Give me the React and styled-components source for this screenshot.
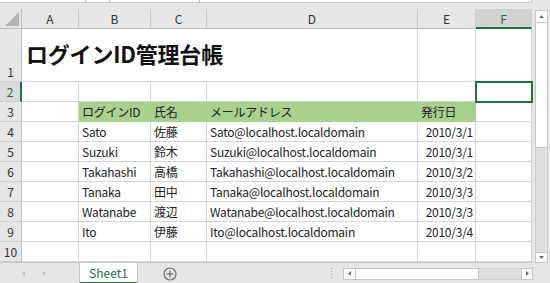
import React from "react";
import styled, { createGlobalStyle } from "styled-components";

const GlobalStyle = createGlobalStyle`
  html, body { margin: 0; padding: 0; background: #e6e6e6; }
  body { font-family: "Noto Sans CJK JP", "Noto Sans", sans-serif; }
`;

const GREEN = "#217346";
const GRID = "#d4d4d4";
const HEAD_BG = "#e6e6e6";
const HEAD_LINE = "#bdbdbd";
const FILL = "#a9d08e";

const Page = styled.div`
  width: 550px;
  height: 283px;
  overflow: hidden;
  background: ${HEAD_BG};
  display: flex;
  flex-direction: column;
  font-family: "Noto Sans CJK JP", "Noto Sans", sans-serif;
`;

const TopStrip = styled.div`
  height: 3px;
  display: flex;
  flex: none;
`;

const TopBox = styled.div`
  box-sizing: border-box;
  width: ${(p) => p.$w}px;
  height: 3px;
  background: #fff;
  border-bottom: 1px solid #c6c6c6;
  border-right: 1px solid #c6c6c6;
`;

const Workspace = styled.div`
  display: flex;
  padding-top: 6px;
  flex: none;
`;

const Sheet = styled.div`
  display: grid;
  grid-template-columns: 22px 57px 72px 56px 211px 58px 56px;
  grid-template-rows: 20px 53px repeat(9, 20px);
  width: 532px;
  border-bottom: 1px solid #c6c6c6;
`;

const Corner = styled.div`
  box-sizing: border-box;
  background: ${HEAD_BG};
  border-right: 1px solid ${HEAD_LINE};
  border-bottom: 1px solid ${HEAD_LINE};
  display: flex;
  align-items: flex-end;
  justify-content: flex-end;
  padding: 0 2px 2px 0;
`;

const ColHead = styled.div`
  box-sizing: border-box;
  background: ${(p) => (p.$active ? "#d2d2d2" : HEAD_BG)};
  border-right: 1px solid ${(p) => (p.$active ? "#d2d2d2" : "#c8c8c8")};
  border-bottom: ${(p) => (p.$active ? `2px solid ${GREEN}` : `1px solid ${HEAD_LINE}`)};
  color: ${(p) => (p.$active ? GREEN : "#333")};
  font-size: 12px;
  line-height: 16px;
  display: flex;
  align-items: center;
  justify-content: center;
  padding-top: ${(p) => (p.$active ? "1px" : "0")};
`;

const RowHead = styled.div`
  box-sizing: border-box;
  background: ${(p) => (p.$active ? "#dadada" : HEAD_BG)};
  border-right: ${(p) => (p.$active ? `2px solid ${GREEN}` : `1px solid ${HEAD_LINE}`)};
  border-bottom: 1px solid #cfcfcf;
  color: ${(p) => (p.$active ? "#2f5f42" : "#333")};
  font-size: 12px;
  line-height: 16px;
  display: flex;
  align-items: ${(p) => (p.$tall ? "flex-end" : "center")};
  justify-content: center;
  padding-bottom: ${(p) => (p.$tall ? "1px" : "0")};
`;

const Cell = styled.div`
  box-sizing: border-box;
  position: relative;
  grid-column: span ${(p) => p.$span || 1};
  background: ${(p) => p.$fill || "#fff"};
  border-right: 1px solid ${(p) => p.$fill || GRID};
  border-bottom: 1px solid ${(p) => p.$fill || GRID};
  color: #222;
  font-size: 12px;
  line-height: 16px;
  letter-spacing: -0.25px;
  white-space: nowrap;
  display: flex;
  align-items: center;
  justify-content: ${(p) => (p.$right ? "flex-end" : "flex-start")};
  padding: ${(p) => (p.$right ? "0 2px 0 0" : "0 0 0 3px")};
  ${(p) =>
    p.$selected &&
    `outline: 2px solid ${GREEN}; outline-offset: -1px; z-index: 2;`}
`;

const TitleCell = styled(Cell)`
  align-items: flex-end;
  font-size: 22px;
  font-weight: 700;
  line-height: 26px;
  color: #111;
  padding: 0 0 15px 4px;
  letter-spacing: -0.2px;
`;

const VScroll = styled.div`
  width: 18px;
  display: flex;
  flex-direction: column;
  padding: 1px 2px 0 3px;
  box-sizing: border-box;
`;

const ArrowBox = styled.div`
  box-sizing: border-box;
  width: ${(p) => p.$w || 13}px;
  height: ${(p) => p.$h || 13}px;
  background: #fff;
  border: 1px solid #c6c6c6;
  display: flex;
  align-items: center;
  justify-content: center;
  flex: none;
`;

const VThumb = styled.div`
  box-sizing: border-box;
  height: 125px;
  background: #fff;
  border: 1px solid #c6c6c6;
  border-top: none;
  flex: none;
`;

const VTrack = styled.div`
  flex: 1;
  background: #dedede;
  border-left: 1px solid #d0d0d0;
  border-right: 1px solid #d0d0d0;
`;

const BottomBar = styled.div`
  height: 21px;
  display: flex;
  align-items: stretch;
  flex: none;
`;

const NavArrows = styled.div`
  width: 79px;
  display: flex;
  align-items: center;
  gap: 16px;
  padding-left: 21px;
  box-sizing: border-box;
`;

const Tab = styled.div`
  box-sizing: border-box;
  width: 59px;
  background: #fff;
  border-left: 1px solid #c6c6c6;
  border-right: 1px solid #c6c6c6;
  border-bottom: 2px solid ${GREEN};
  color: ${GREEN};
  font-size: 12px;
  line-height: 16px;
  display: flex;
  align-items: center;
  justify-content: center;
`;

const AddButton = styled.div`
  margin-left: 25px;
  display: flex;
  align-items: center;
`;

const Spacer = styled.div`
  flex: 1;
`;

const Dots = styled.div`
  display: flex;
  align-items: center;
  margin-right: 10px;
`;

const HScroll = styled.div`
  display: flex;
  align-items: center;
  width: 190px;
  margin-right: 17px;
`;

const HRow = styled.div`
  display: flex;
  width: 100%;
  height: 12px;
`;

const HThumb = styled.div`
  box-sizing: border-box;
  width: 123px;
  height: 12px;
  background: #fff;
  border: 1px solid #c6c6c6;
  border-left: none;
`;

const HTrack = styled.div`
  flex: 1;
  background: #dedede;
  border-top: 1px solid #d0d0d0;
  border-bottom: 1px solid #d0d0d0;
  box-sizing: border-box;
`;

const Tri = ({ dir, color = "#6b6b6b", size = 5 }) => {
  const s = size;
  const pts = {
    up: `0,${s - 1} ${s},${s - 1} ${s / 2},1`,
    down: `0,1 ${s},1 ${s / 2},${s - 1}`,
    left: `${s - 1},0 ${s - 1},${s} 1,${s / 2}`,
    right: `1,0 1,${s} ${s - 1},${s / 2}`,
  }[dir];
  return (
    <svg width={s} height={s} viewBox={`0 0 ${s} ${s}`}>
      <polygon points={pts} fill={color} />
    </svg>
  );
};

const cols = ["A", "B", "C", "D", "E", "F"];

const data = [
  ["Sato", "佐藤", "2010/3/1"],
  ["Suzuki", "鈴木", "2010/3/1"],
  ["Takahashi", "高橋", "2010/3/2"],
  ["Tanaka", "田中", "2010/3/3"],
  ["Watanabe", "渡辺", "2010/3/3"],
  ["Ito", "伊藤", "2010/3/4"],
];

export default function App() {
  return (
    <Page>
      <GlobalStyle />
      <TopStrip>
        <TopBox $w={86} />
        <TopBox $w={24} />
        <TopBox $w={90} />
        <TopBox $w={332} />
      </TopStrip>
      <Workspace>
        <Sheet>
          <Corner>
            <svg width="14" height="14" viewBox="0 0 14 14">
              <polygon points="0,14 14,14 14,0" fill="#b5b5b5" />
            </svg>
          </Corner>
          {cols.map((c) => (
            <ColHead key={c} $active={c === "F"}>
              {c}
            </ColHead>
          ))}

          <RowHead $tall>1</RowHead>
          <TitleCell $span={4}>ログインID管理台帳</TitleCell>
          <Cell />
          <Cell />

          <RowHead $active>2</RowHead>
          <Cell />
          <Cell />
          <Cell />
          <Cell />
          <Cell />
          <Cell $selected />

          <RowHead>3</RowHead>
          <Cell />
          <Cell $fill={FILL}>ログインID</Cell>
          <Cell $fill={FILL}>氏名</Cell>
          <Cell $fill={FILL}>メールアドレス</Cell>
          <Cell $fill={FILL}>発行日</Cell>
          <Cell />

          {data.map(([id, name, date], i) => (
            <React.Fragment key={id}>
              <RowHead>{i + 4}</RowHead>
              <Cell />
              <Cell>{id}</Cell>
              <Cell>{name}</Cell>
              <Cell>{id}@localhost.localdomain</Cell>
              <Cell $right>{date}</Cell>
              <Cell />
            </React.Fragment>
          ))}

          <RowHead>10</RowHead>
          <Cell />
          <Cell />
          <Cell />
          <Cell />
          <Cell />
          <Cell />
        </Sheet>
        <VScroll>
          <ArrowBox>
            <Tri dir="up" />
          </ArrowBox>
          <VThumb />
          <VTrack />
          <ArrowBox $h={11}>
            <Tri dir="down" />
          </ArrowBox>
        </VScroll>
      </Workspace>
      <BottomBar>
        <NavArrows>
          <Tri dir="left" color="#c4c4c4" />
          <Tri dir="right" color="#c4c4c4" />
        </NavArrows>
        <Tab>Sheet1</Tab>
        <AddButton>
          <svg width="14" height="14" viewBox="0 0 14 14">
            <circle cx="7" cy="7" r="6" fill="none" stroke="#6e6e6e" strokeWidth="1.2" />
            <line x1="7" y1="3.5" x2="7" y2="10.5" stroke="#6e6e6e" strokeWidth="1.2" />
            <line x1="3.5" y1="7" x2="10.5" y2="7" stroke="#6e6e6e" strokeWidth="1.2" />
          </svg>
        </AddButton>
        <Spacer />
        <Dots>
          <svg width="3" height="11" viewBox="0 0 3 11">
            <rect x="1" y="0" width="1" height="1" fill="#a0a0a0" />
            <rect x="1" y="3" width="1" height="1" fill="#a0a0a0" />
            <rect x="1" y="6" width="1" height="1" fill="#a0a0a0" />
            <rect x="1" y="9" width="1" height="1" fill="#a0a0a0" />
          </svg>
        </Dots>
        <HScroll>
          <HRow>
            <ArrowBox $w={13} $h={12}>
              <Tri dir="left" />
            </ArrowBox>
            <HThumb />
            <HTrack />
            <ArrowBox $w={12} $h={12}>
              <Tri dir="right" />
            </ArrowBox>
          </HRow>
        </HScroll>
      </BottomBar>
    </Page>
  );
}
